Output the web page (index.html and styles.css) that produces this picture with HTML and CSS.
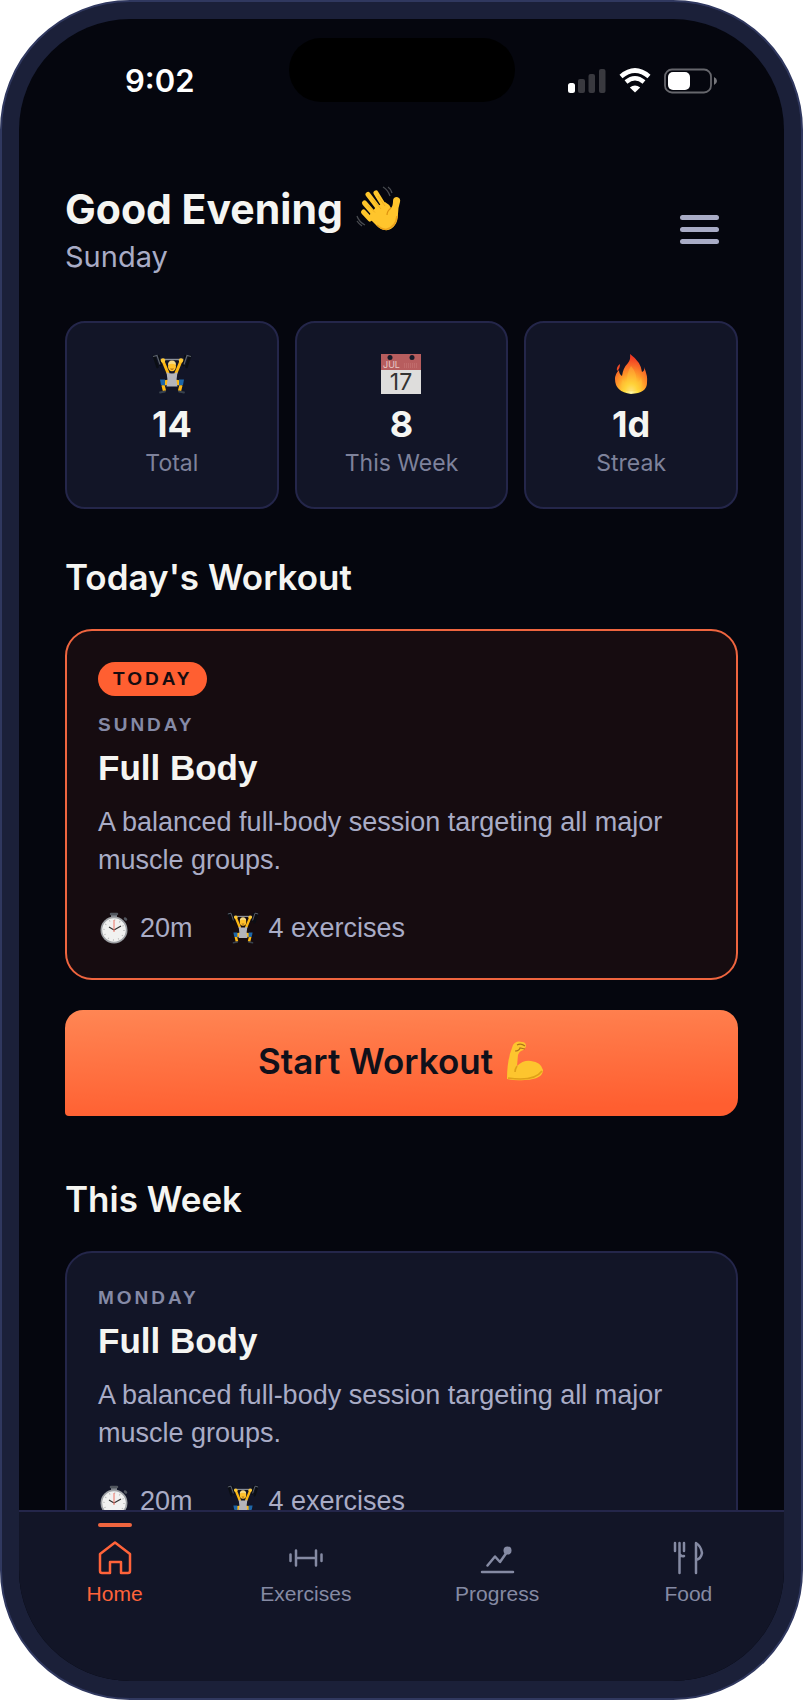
FILE: index.html
```html
<!DOCTYPE html>
<html lang="en">
<head>
    <meta charset="UTF-8">
    <meta name="viewport" content="width=device-width, initial-scale=1.0">
    <title>Workouts</title>
    <link rel="stylesheet" href="styles.css">
</head>
<body>
    <!-- Shared icons -->
    <svg class="sprite" aria-hidden="true">
        <symbol id="lifter" viewBox="0 0 40 40">
            <path d="M8 5.500h24" stroke="#8d929b" stroke-width="1.400"/>
            <path d="M2 2l3.500 11M6.500 2l2 9M38 2l-3.500 11M33.500 2l-2 9" stroke="#0b0e14" stroke-width="2.600" stroke-linecap="round"/>
            <path d="M1 2.500l4-1 3 9M39 2.500l-4-1-3 9" stroke="#5b626d" stroke-width="1.200" fill="none"/>
            <path d="M11 7l5 12M29 7l-5 12" stroke="#fdb813" stroke-width="3" stroke-linecap="round"/>
            <circle cx="11" cy="6.500" r="2.200" fill="#ffc934"/>
            <circle cx="29" cy="6.500" r="2.200" fill="#ffc934"/>
            <path d="M11 31l1.500 6M29 31l-1.500 6" stroke="#fdb813" stroke-width="3.200"/>
            <path d="M17 28l-5 1M23 28l5 1" stroke="#fdb813" stroke-width="5" stroke-linecap="round"/>
            <path d="M8 25.500h5v6l-4-.5zM32 25.500h-5v6l4-.5z" fill="#1d66a8"/>
            <path d="M14.500 18q5.500 3 11 0l-1 8 1 6.500h-11l1-6.500z" fill="#b4b5bb"/>
            <ellipse cx="20" cy="12.500" rx="4" ry="4.800" fill="#ffc12b"/>
            <path d="M16 11q0-4.500 4-4.500t4 4.500q-4-2.500-8 0z" fill="#f6d981"/>
            <path d="M18.500 14.800q1.500 1 3 0" stroke="#9a5b13" fill="none"/>
            <path d="M8 38.500l5-1M32 38.500l-5-1" stroke="#39424d" stroke-width="1.800" stroke-linecap="round"/>
        </symbol>
        <symbol id="stopwatch" viewBox="0 0 32 32">
            <path d="M13 2h6v5h-6z" fill="#777c84"/>
            <path d="M13 2h6" stroke="#51565e" stroke-width="2.500" stroke-linecap="round"/>
            <path d="M27 6.500l1 1" stroke="#51565e" stroke-width="2.500" stroke-linecap="round"/>
            <circle cx="16" cy="18" r="13.500" fill="#9ea1a5"/>
            <circle cx="16" cy="18" r="11.800" fill="#f1f1f0"/>
            <circle cx="16" cy="18" r="10" fill="none" stroke="#bbb" stroke-width="1.500" stroke-dasharray="1 4.236"/>
            <path d="M16 18l-5-3M16 18l7-4" stroke="#333" stroke-width="1.200"/>
            <path d="M16 20V8" stroke="#ef7365"/>
        </symbol>
    </svg>

    <div class="phone">
        <div class="screen">
            <div class="status-bar">
                <span class="time">9:02</span>
                <div class="island"></div>
                <div class="status-icons">
                    <svg width="38" height="24" viewBox="0 0 38 24" fill="#39393f">
                        <rect x="0" y="14" width="7" height="10" rx="2.500" fill="#fff"/>
                        <rect x="10" y="10" width="7" height="14" rx="2"/>
                        <rect x="20.500" y="5" width="6.500" height="19" rx="2"/>
                        <rect x="31" y="0" width="6.500" height="24" rx="2"/>
                    </svg>
                    <svg width="32" height="24" viewBox="0 0 32 24">
                        <path d="M2 7.500Q16-4.500 30 7.500" fill="none" stroke="#fff" stroke-width="4.600"/>
                        <path d="M7 13Q16 5.500 25 13" fill="none" stroke="#fff" stroke-width="4.400"/>
                        <path d="M10.800 18.500Q16 14.500 21.200 18.500L16 23.600z" fill="#fff"/>
                    </svg>
                    <svg width="53" height="26" viewBox="0 0 53 26">
                        <rect x="1" y="1.500" width="46" height="23" rx="7" fill="none" stroke="#66666c" stroke-width="1.800"/>
                        <rect x="4" y="4" width="22" height="18" rx="5" fill="#fff"/>
                        <path d="M50 9q3 1.500 3 4t-3 4z" fill="#77777c"/>
                    </svg>
                </div>
            </div>

            <main class="content">
                <header class="greeting">
                    <div>
                        <h1>Good Evening
                            <svg width="46" height="46" viewBox="0 0 46 46" aria-hidden="true">
                                <path d="M14 33L7.500 26M18 28L8.500 17M23 23L12 8.500M28 20L20 7" fill="none" stroke="#ffc62b" stroke-width="5" stroke-linecap="round"/>
                                <path d="M12 31l8-10 9-5q4 2 6 6 2-2 2-7 0-4 4-4 4 1 3 5-2 6-2 12 0 7-3 11-4 6-10 5-4 0-8-4z" fill="#ffc52c"/>
                                <path d="M35 22q-4 3-4 7" fill="none" stroke="#de920f" stroke-width="1.200"/>
                                <path d="M12 19.500l7 7M16 12.500l9 10.500M22 10l7 10" stroke="#eba81e" stroke-width=".8"/>
                                <path d="M41 30q-1 11-11 13.500-5-.5-9-4.500" stroke="#eba01b" stroke-width="1.600" fill="none"/>
                                <path d="M27 1q5 3 7 9M32 1q3 2 4 6M1 30q2 6 8 9M1 35q2 3 5 5" fill="none" stroke="#494b50" stroke-width="1.300"/>
                            </svg>
                        </h1>
                        <p class="day">Sunday</p>
                    </div>
                    <button class="menu-button" type="button" aria-label="Menu">
                        <span></span>
                        <span></span>
                        <span></span>
                    </button>
                </header>

                <section class="stats">
                    <div class="stat">
                        <svg width="40" height="40"><use href="#lifter"/></svg>
                        <strong>14</strong>
                        <span>Total</span>
                    </div>
                    <div class="stat">
                        <svg width="40" height="40" viewBox="0 0 40 40">
                            <path d="M0 0h40v40H0z" fill="#dedddc"/>
                            <path d="M0 0h40v16H0z" fill="#b75d5e"/>
                            <circle cx="9" cy="3.500" r="2.500" fill="#171a29"/>
                            <circle cx="31" cy="3.500" r="2.500" fill="#171a29"/>
                            <path d="M23 11.500h14" stroke="#c06b6b" stroke-width="5" stroke-dasharray="1 1"/>
                            <text x="2" y="14" class="cal-month">JUL</text>
                            <text x="20" y="36" class="cal-date">17</text>
                        </svg>
                        <strong>8</strong>
                        <span>This Week</span>
                    </div>
                    <div class="stat">
                        <svg width="40" height="40" viewBox="0 0 40 40">
                            <defs>
                                <radialGradient id="flame" cx=".5" cy=".95" r=".85">
                                    <stop offset="0" stop-color="#fff9ac"/>
                                    <stop offset=".25" stop-color="#ffdc38"/>
                                    <stop offset=".55" stop-color="#ff9829"/>
                                    <stop offset="1" stop-color="#f23c24"/>
                                </radialGradient>
                            </defs>
                            <path d="M19 0q11 8 12 18 3-1 2-5 4 9 3 16 0 10-16 11Q4 38 4 25q0-5 4-9 0 4 3 6Q12 14 17 9 20 5 19 0z" fill="url(#flame)"/>
                            <path d="M9 10q-4 3-3 7 3-2 3-7z" fill="#f24a27"/>
                            <path d="M20 12q7 8 5 17 4-1 5-6 3 10-3 13-7 3-14 0-5-4-1-11 1 4 4 4-1-9 4-17z" fill="#ffc43a" opacity=".4"/>
                        </svg>
                        <strong>1d</strong>
                        <span>Streak</span>
                    </div>
                </section>

                <h2>Today's Workout</h2>
                <article class="card today">
                    <span class="badge">TODAY</span>
                    <p class="label">SUNDAY</p>
                    <h3>Full Body</h3>
                    <p class="description">A balanced full-body session targeting all major muscle groups.</p>
                    <div class="meta">
                        <span><svg width="32" height="32"><use href="#stopwatch"/></svg>20m</span>
                        <span><svg width="32" height="32"><use href="#lifter"/></svg>4 exercises</span>
                    </div>
                </article>
                <button class="start-button" type="button">Start Workout
                    <svg width="40" height="40" viewBox="0 0 40 40" aria-hidden="true">
                        <path d="M8 4q3-5 9-3 4 0 4 4-1 4-5 5-2 1-3 4l-1 11q6-6 14-5 10 1 12 9 0 9-18 10-10 1-18-1 0-20 6-34z" fill="#fdc52e"/>
                        <path d="M12 25q-2 3-2 6M3 37q26 4 34-7" fill="none" stroke="#dfa019" stroke-width="1.600"/>
                        <path d="M10 10q4 0 5-3l5 1M12 4q4-2 8 1" fill="none" stroke="#af741b" stroke-width="1.200"/>
                    </svg>
                </button>

                <h2>This Week</h2>
                <article class="card">
                    <p class="label">MONDAY</p>
                    <h3>Full Body</h3>
                    <p class="description">A balanced full-body session targeting all major muscle groups.</p>
                    <div class="meta">
                        <span><svg width="32" height="32"><use href="#stopwatch"/></svg>20m</span>
                        <span><svg width="32" height="32"><use href="#lifter"/></svg>4 exercises</span>
                    </div>
                </article>
            </main>

            <nav class="tabs">
                <a href="#" class="active" aria-current="page">
                    <svg width="34" height="34" viewBox="0 0 34 34">
                        <path d="M17 1.500L32 13v17q0 2-2 2h-7V21H12v11H4q-2 0-2-2V13z"/>
                    </svg>
                    Home
                </a>
                <a href="#">
                    <svg width="34" height="34" viewBox="0 0 34 34">
                        <path d="M1.500 13.500v6.500M7 9.500v15M27 9.500v15M32.500 13.500v6.500M9 17h16"/>
                    </svg>
                    Exercises
                </a>
                <a href="#">
                    <svg width="34" height="34" viewBox="0 0 34 34">
                        <path d="M2 31h31M7.500 24.500L15 15.500l5 5.500 7-10"/>
                        <circle cx="27.500" cy="9.500" r="4" fill="currentColor" stroke="none"/>
                    </svg>
                    Progress
                </a>
                <a href="#">
                    <svg width="34" height="34" viewBox="0 0 34 34">
                        <path d="M4 2v8M8.500 2v30M13 2v8M8.500 13q2 3 4.500 2M25 32V2q5 3 6 10-1 6-6 7"/>
                    </svg>
                    Food
                </a>
            </nav>
        </div>
    </div>
</body>
</html>
```

FILE: styles.css
```css
* {
    box-sizing: border-box;
}

body {
    margin: 0;
    background: #fff;
    color: #f5f5f2;
    font-family: Inter, sans-serif;
}
h1, h2, h3, p {
    margin: 0;
}
svg {
    display: block;
    flex-shrink: 0;
    overflow: visible;
}
button {
    border: none;
    cursor: pointer;
}
.sprite {
    position: absolute;
    width: 0;
    height: 0;
}

/* Device frame */
.phone {
    height: 100vh;
    padding: 17px;
    border: 2px solid #30385f;
    border-radius: 130px;
    background: #1b2039;
}
.screen {
    display: flex;
    flex-direction: column;
    height: 100%;
    border-radius: 111px;
    background: #05060e;
    overflow: hidden;
}

/* Status bar */
.status-bar {
    display: grid;
    grid-template-columns: 1fr 226px 1fr;
    align-items: end;
    padding-top: 19px;
    color: #fff;
}
.time {
    padding-left: 106px;
    font-size: 31px;
    font-weight: 600;
    line-height: 42px;
}
.island {
    height: 64px;
    border-radius: 32px;
    background: #000;
}
.status-icons {
    display: flex;
    justify-content: flex-end;
    align-items: center;
    gap: 13px;
    height: 42px;
    padding-right: 67px;
}

/* Content */
.content {
    flex: 1;
    min-height: 0;
    overflow-y: auto;
    scrollbar-width: none;
    padding: 81px 46px 0;
}
.greeting {
    display: flex;
    justify-content: space-between;
    align-items: center;
    margin-bottom: 42px;
}
h1 {
    display: flex;
    align-items: center;
    gap: 13px;
    font-size: 41px;
    font-weight: 700;
    line-height: 52px;
}
.day {
    color: #a9acc6;
    font-size: 29px;
    line-height: 44px;
}
.menu-button {
    display: flex;
    flex-direction: column;
    gap: 7px;
    padding: 17px 19px 20px;
    background: none;
}
.menu-button span {
    width: 39px;
    height: 5px;
    border-radius: 3px;
    background: #a9acc6;
}
.stats {
    display: grid;
    grid-template-columns: repeat(3, 1fr);
    gap: 16px;
}
.stat {
    display: flex;
    flex-direction: column;
    align-items: center;
    padding: 31px 0 27px;
    border: 2px solid #24264a;
    border-radius: 20px;
    background: #121527;
}
.stat strong {
    margin-top: 7px;
    font-size: 36px;
    line-height: 46px;
}
.stat span {
    color: #7e829b;
    font-size: 23px;
    line-height: 33px;
}
.cal-month {
    fill: #e9c9c8;
    font-size: 9px;
}
.cal-date {
    fill: #333;
    font-size: 23px;
    text-anchor: middle;
}
h2 {
    margin: 46px 0 30px;
    font-size: 35px;
    font-weight: 600;
    line-height: 44px;
}

/* Workout cards */
.card {
    padding: 31px;
    border: 2px solid #24264a;
    border-radius: 27px;
    background: #121527;
    font-family: "Liberation Sans", Arial, sans-serif;
}
.card.today {
    border-color: #ef653f;
    background: #160c10;
}
.badge {
    display: block;
    width: fit-content;
    margin-bottom: 15px;
    padding: 0 15px;
    border-radius: 17px;
    background: #ff5f31;
    color: #160c10;
    font-size: 19px;
    font-weight: 700;
    line-height: 34px;
    letter-spacing: 3px;
}
.label {
    color: #858aa6;
    font-size: 19px;
    font-weight: 700;
    line-height: 28px;
    letter-spacing: 3px;
}
h3 {
    margin: 7px 0 13px;
    font-size: 35px;
    line-height: 44px;
}
.description, .meta {
    color: #a9acc6;
    font-size: 27px;
    line-height: 38px;
}
.meta {
    display: flex;
    gap: 34px;
    margin-top: 30px;
}
.meta span {
    display: flex;
    align-items: center;
    gap: 10px;
}
.start-button {
    display: flex;
    justify-content: center;
    align-items: center;
    gap: 12px;
    width: 100%;
    height: 106px;
    margin: 30px 0 61px;
    padding-bottom: 6px;
    border-radius: 18px 18px 18px 4px;
    background: linear-gradient(178deg, #ff8654, #ff5e30 90%);
    color: #10101a;
    font-family: Inter, sans-serif;
    font-size: 35px;
    font-weight: 600;
}

/* Bottom navigation */
.tabs {
    display: grid;
    grid-template-columns: repeat(4, 1fr);
    height: 171px;
    border-top: 2px solid #24264a;
    background: #121527;
}
.tabs a {
    display: flex;
    flex-direction: column;
    align-items: center;
    gap: 6px;
    color: #858aa3;
    font-family: "Liberation Sans", Arial, sans-serif;
    font-size: 21px;
    line-height: 26px;
    text-decoration: none;
}
.tabs a::before {
    content: "";
    width: 34px;
    height: 4px;
    margin: 11px 0 8px;
    border-radius: 2px;
}
.tabs svg {
    fill: none;
    stroke: currentColor;
    stroke-width: 2.5px;
    stroke-linecap: round;
    stroke-linejoin: round;
}
.tabs a.active {
    color: #ff633a;
}
.tabs a.active::before {
    background: #ef653f;
}
```
